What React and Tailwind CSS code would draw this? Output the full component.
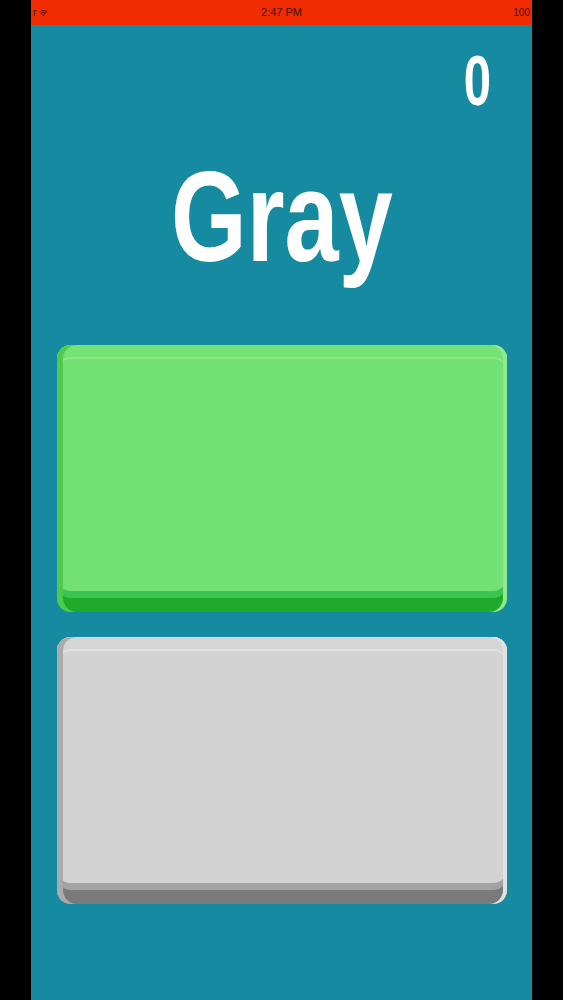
import React from "react";

const font = { fontFamily: '"Liberation Sans", Arial, sans-serif' };

function StatusBar() {
  return (
    <div className="flex h-[25px] items-center overflow-hidden bg-[#f02c00] px-[2px] text-[10px] text-[#4a1200]">
      <div className="flex flex-1 items-center gap-[3px]">
        <span>r</span>
        <svg width="9" height="8" viewBox="0 0 10 8" className="fill-[#4a1200]">
          <path d="M5 7.5 L3.6 6 A2 2 0 0 1 6.4 6 Z" />
          <path d="M1.9 4.3 A4.4 4.4 0 0 1 8.1 4.3 L7.2 5.2 A3.1 3.1 0 0 0 2.8 5.2 Z" />
          <path d="M0.2 2.6 A6.8 6.8 0 0 1 9.8 2.6 L8.9 3.5 A5.5 5.5 0 0 0 1.1 3.5 Z" />
        </svg>
      </div>
      <span className="text-[11px]">2:47 PM</span>
      <div className="flex flex-1 justify-end">
        <span>100</span>
      </div>
    </div>
  );
}

function BevelButton({ face, shadow }) {
  return (
    <div className={`ml-[26px] mr-[25px] h-[267px] rounded-[14px] ${face} ${shadow}`} />
  );
}

export default function App() {
  return (
    <div className="flex min-h-screen justify-center bg-black" style={font}>
      <div className="flex h-[1000px] w-[501px] flex-col bg-[#168aa1]">
        <StatusBar />

        {/* score */}
        <div className="mt-[21px] flex justify-end pr-[41px]">
          <span className="origin-right scale-x-[0.7] text-[70px] font-bold leading-none text-white">0</span>
        </div>

        {/* color word */}
        <div className="mt-[37px] text-center">
          <span className="inline-block scale-x-[0.76] text-[128px] font-bold leading-none text-white">Gray</span>
        </div>

        <div className="mt-[64px] flex flex-col gap-[25px]">
          <BevelButton
            face="bg-[#72e072]"
            shadow="shadow-[inset_6px_0_0_#4ccb4c,inset_-4px_0_0_#8fe88f,inset_0_-14px_0_#1faa2a,inset_0_-21px_0_#3cc452,inset_0_12px_0_#74e274,inset_0_14px_0_#8aea8a]"
          />
          <BevelButton
            face="bg-[#d4d3d4]"
            shadow="shadow-[inset_6px_0_0_#ababab,inset_-4px_0_0_#e2e2e2,inset_0_-14px_0_#7a7a7a,inset_0_-21px_0_#a3a3a3,inset_0_12px_0_#d6d5d6,inset_0_14px_0_#e2e2e2]"
          />
        </div>
      </div>
    </div>
  );
}
